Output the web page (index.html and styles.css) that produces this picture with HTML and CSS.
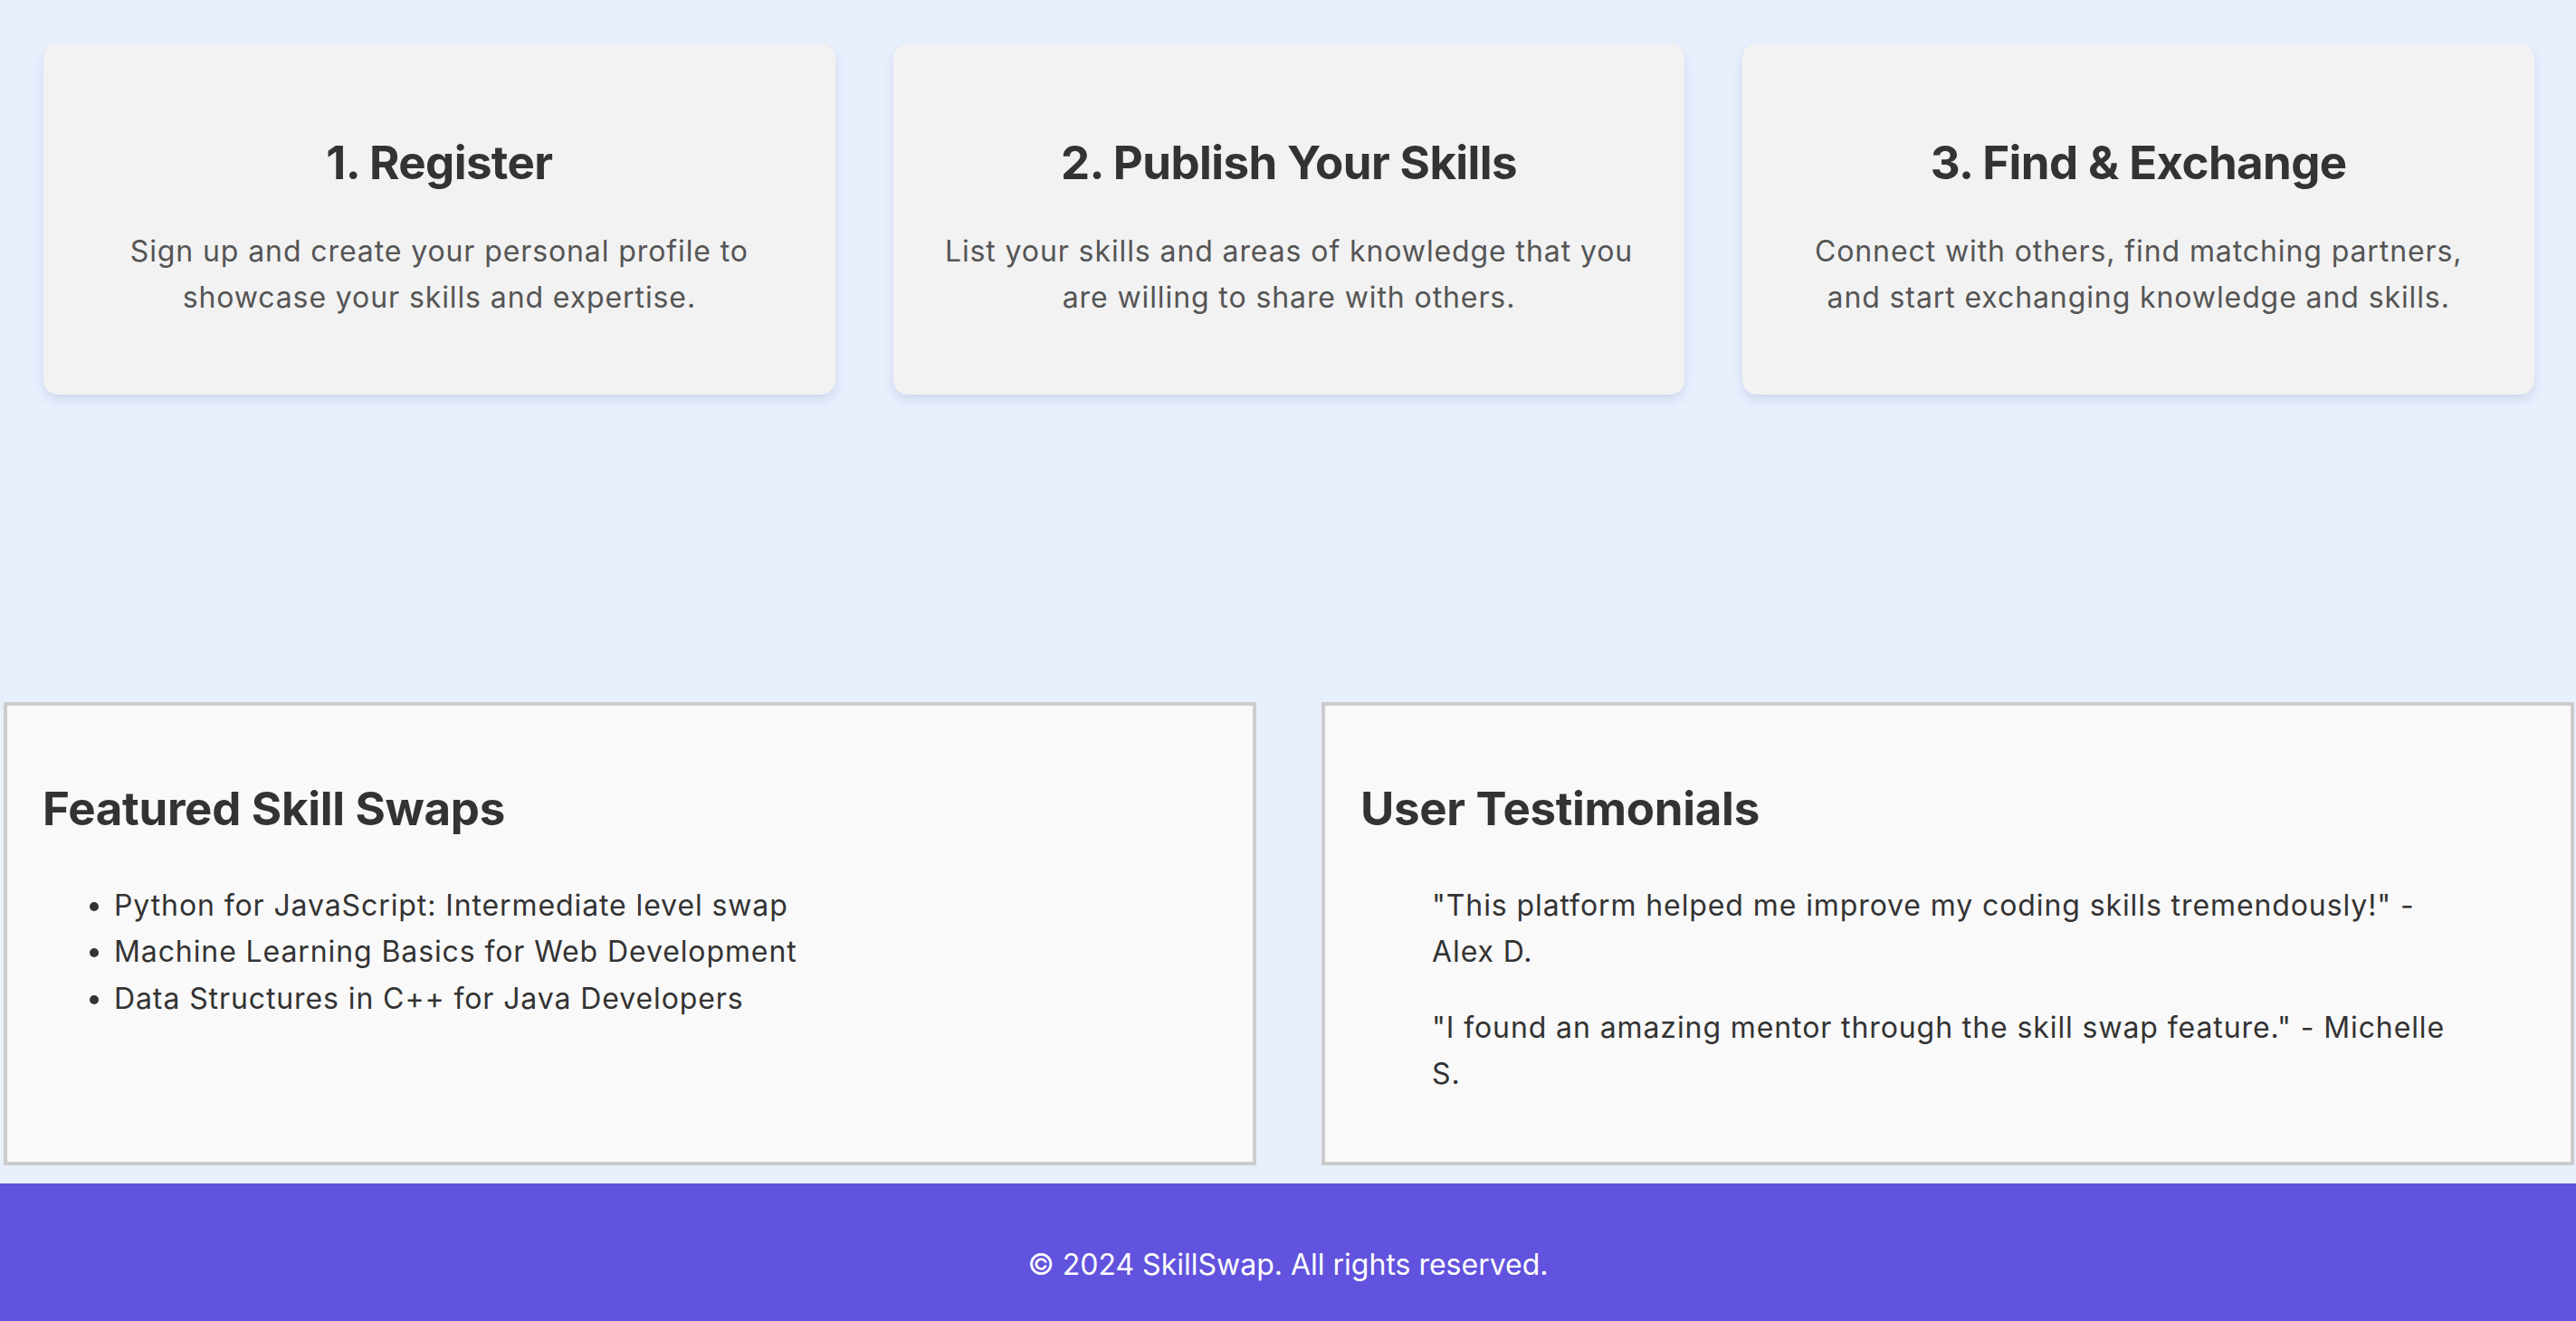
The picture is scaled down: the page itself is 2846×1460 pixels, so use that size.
FILE: index.html
```html
<!DOCTYPE html>
<html lang="en">
<head>
<meta charset="utf-8">
<title>SkillSwap</title>
<link rel="stylesheet" href="styles.css">
</head>
<body>
<main>
  <section class="steps">
    <div class="step-card">
      <h2>1. Register</h2>
      <p>Sign up and create your personal profile to showcase your skills and expertise.</p>
    </div>
    <div class="step-card">
      <h2>2. Publish Your Skills</h2>
      <p>List your skills and areas of knowledge that you are willing to share with others.</p>
    </div>
    <div class="step-card">
      <h2>3. Find &amp; Exchange</h2>
      <p>Connect with others, find matching partners, and start exchanging knowledge and skills.</p>
    </div>
  </section>

  <section class="highlights">
    <div class="panel">
      <h2>Featured Skill Swaps</h2>
      <ul class="swap-list">
        <li>Python for JavaScript: Intermediate level swap</li>
        <li>Machine Learning Basics for Web Development</li>
        <li>Data Structures in C++ for Java Developers</li>
      </ul>
    </div>
    <div class="panel">
      <h2>User Testimonials</h2>
      <p class="quote">"This platform helped me improve my coding skills tremendously!" - Alex D.</p>
      <p class="quote">"I found an amazing mentor through the skill swap feature." - Michelle S.</p>
    </div>
  </section>
</main>
<footer class="site-footer">
  <p>&copy; 2024 SkillSwap. All rights reserved.</p>
</footer>
</body>
</html>
```
FILE: styles.css
```css
* {
  box-sizing: border-box;
}

body {
  margin: 0;
  background: #e8effd;
  font-family: Inter, "Open Sans", sans-serif;
  font-size: 32px;
  line-height: 1.6;
  color: #333;
}

.steps {
  display: grid;
  grid-template-columns: repeat(3, 1fr);
  gap: 64px;
  padding: 48px 46px 0 48px;
}

.step-card {
  background: #f2f2f2;
  border-radius: 16px;
  box-shadow: 0 6px 12px rgba(40, 60, 120, 0.12);
  padding: 101px 48px 0;
  height: 388px;
  text-align: center;
}

.step-card h2 {
  margin: 0 0 42px;
  font-size: 51px;
  line-height: 1.2;
  font-weight: 700;
  letter-spacing: -0.6px;
  color: #333;
}

.step-card p {
  margin: 0;
  color: #555;
  letter-spacing: 0.9px;
}

.highlights {
  display: flex;
  gap: 72px;
  margin: 340px 2px 0 4px;
}

.panel {
  flex: 1;
  background: #f9f9f9;
  border: 4px solid #ccc;
  padding: 40px 39px;
}

.panel h2 {
  margin: 43px 0 51px;
  font-size: 51px;
  line-height: 1.2;
  font-weight: 700;
  letter-spacing: -0.3px;
  color: #333;
}

.swap-list {
  margin: 0;
  padding-left: 79px;
  letter-spacing: 0.9px;
}

.quote {
  margin: 0 79px 32px;
  letter-spacing: 0.9px;
}

.site-footer {
  margin-top: 20px;
  background: #6153dd;
  color: #fff;
  text-align: center;
  padding: 64px 0;
}

.site-footer p {
  margin: 0;
}
```
